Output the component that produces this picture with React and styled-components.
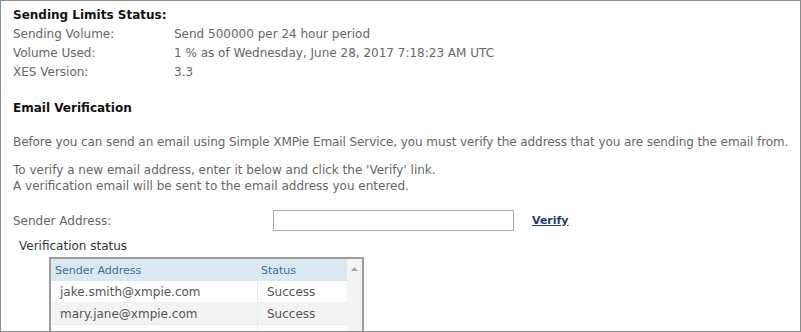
import React from "react";
import styled, { createGlobalStyle } from "styled-components";

const Global = createGlobalStyle`
  html, body { margin: 0; padding: 0; background: #fff; }
  body { font-family: "DejaVu Sans", Verdana, sans-serif; }
`;

const Frame = styled.div`
  box-sizing: border-box;
  width: 801px;
  height: 332px;
  border: 1px solid #8c8c8c;
  overflow: hidden;
  padding: 6px 12px 0 12px;
  font-size: 12px;
  color: #666;
`;

const Heading = styled.div`
  font-weight: bold;
  color: #111;
  font-size: 12px;
  line-height: 17px;
  margin-top: ${(p) => p.$top || 0}px;
`;

const InfoGrid = styled.div`
  display: grid;
  grid-template-columns: 161px 1fr;
  grid-auto-rows: 19px;
  align-items: center;
`;

const Para = styled.p`
  margin: ${(p) => p.$top || 0}px 0 0 0;
  line-height: 16px;
  letter-spacing: ${(p) => (p.$tight ? "-0.08px" : "normal")};
  white-space: nowrap;
`;

const SenderRow = styled.div`
  display: flex;
  align-items: center;
  margin-top: 16px;
  height: 21px;
`;

const SenderLabel = styled.span`
  width: 260px;
`;

const Input = styled.input`
  box-sizing: border-box;
  width: 241px;
  height: 21px;
  border: 1px solid #a9a9a9;
  margin: 0;
  padding: 0 3px;
`;

const VerifyLink = styled.a`
  margin-left: 18px;
  font-weight: bold;
  color: #1e3f6c;
  text-decoration: underline;
  font-size: 11px;
`;

const StatusTitle = styled.div`
  margin: 7px 0 0 6px;
  color: #333;
  line-height: 17px;
`;

const TableBox = styled.div`
  box-sizing: border-box;
  margin: 2px 0 0 36px;
  width: 315px;
  border: 2px solid #9c9c9c;
  border-bottom: none;
  display: flex;
  height: 80px;
`;

const TableBody = styled.div`
  flex: 1;
`;

const Row = styled.div`
  display: grid;
  grid-template-columns: 206px 1fr;
  height: ${(p) => (p.$head ? 22 : 21)}px;
  align-items: center;
  background: ${(p) => (p.$head ? "#dae9f1" : p.$alt ? "#f3f3f3" : "#fff")};
  color: ${(p) => (p.$head ? "#3c6e98" : "#555")};
  font-size: ${(p) => (p.$head ? 11 : 12)}px;
  border-bottom: ${(p) => (p.$head ? "none" : "1px solid #e4eef5")};
`;

const Cell = styled.div`
  height: 100%;
  display: flex;
  align-items: center;
  padding-left: ${(p) => p.$pad}px;
  border-left: ${(p) => (p.$sep ? "1px solid #e1edf5" : "none")};
`;

const Scroll = styled.div`
  width: 15px;
  background: #f4f4f4;
  display: flex;
  justify-content: center;
  padding-top: 8px;
`;

const rows = [
  ["jake.smith@xmpie.com", "Success"],
  ["mary.jane@xmpie.com", "Success"],
  ["", ""],
];

export default function App() {
  return (
    <>
      <Global />
      <Frame>
        <Heading>Sending Limits Status:</Heading>
        <InfoGrid>
          <span>Sending Volume:</span>
          <span>Send 500000 per 24 hour period</span>
          <span>Volume Used:</span>
          <span>1 % as of Wednesday, June 28, 2017 7:18:23 AM UTC</span>
          <span>XES Version:</span>
          <span>3.3</span>
        </InfoGrid>
        <Heading $top={19}>Email Verification</Heading>
        <Para $top={17} $tight>
          Before you can send an email using Simple XMPie Email Service, you must verify the address that you are sending the email from.
        </Para>
        <Para $top={12}>
          To verify a new email address, enter it below and click the 'Verify' link.
          <br />
          A verification email will be sent to the email address you entered.
        </Para>
        <SenderRow>
          <SenderLabel>Sender Address:</SenderLabel>
          <Input type="text" />
          <VerifyLink href="#">Verify</VerifyLink>
        </SenderRow>
        <StatusTitle>Verification status</StatusTitle>
        <TableBox>
          <TableBody>
            <Row $head>
              <Cell $pad={4}>Sender Address</Cell>
              <Cell $pad={4}>Status</Cell>
            </Row>
            {rows.map((r, i) => (
              <Row key={i} $alt={i % 2 === 1}>
                <Cell $pad={9}>{r[0]}</Cell>
                <Cell $pad={9} $sep>{r[1]}</Cell>
              </Row>
            ))}
          </TableBody>
          <Scroll>
            <svg width="7" height="4" viewBox="0 0 7 4">
              <path d="M0 4 L3.5 0 L7 4 Z" fill="#a8a8a8" />
            </svg>
          </Scroll>
        </TableBox>
      </Frame>
    </>
  );
}
